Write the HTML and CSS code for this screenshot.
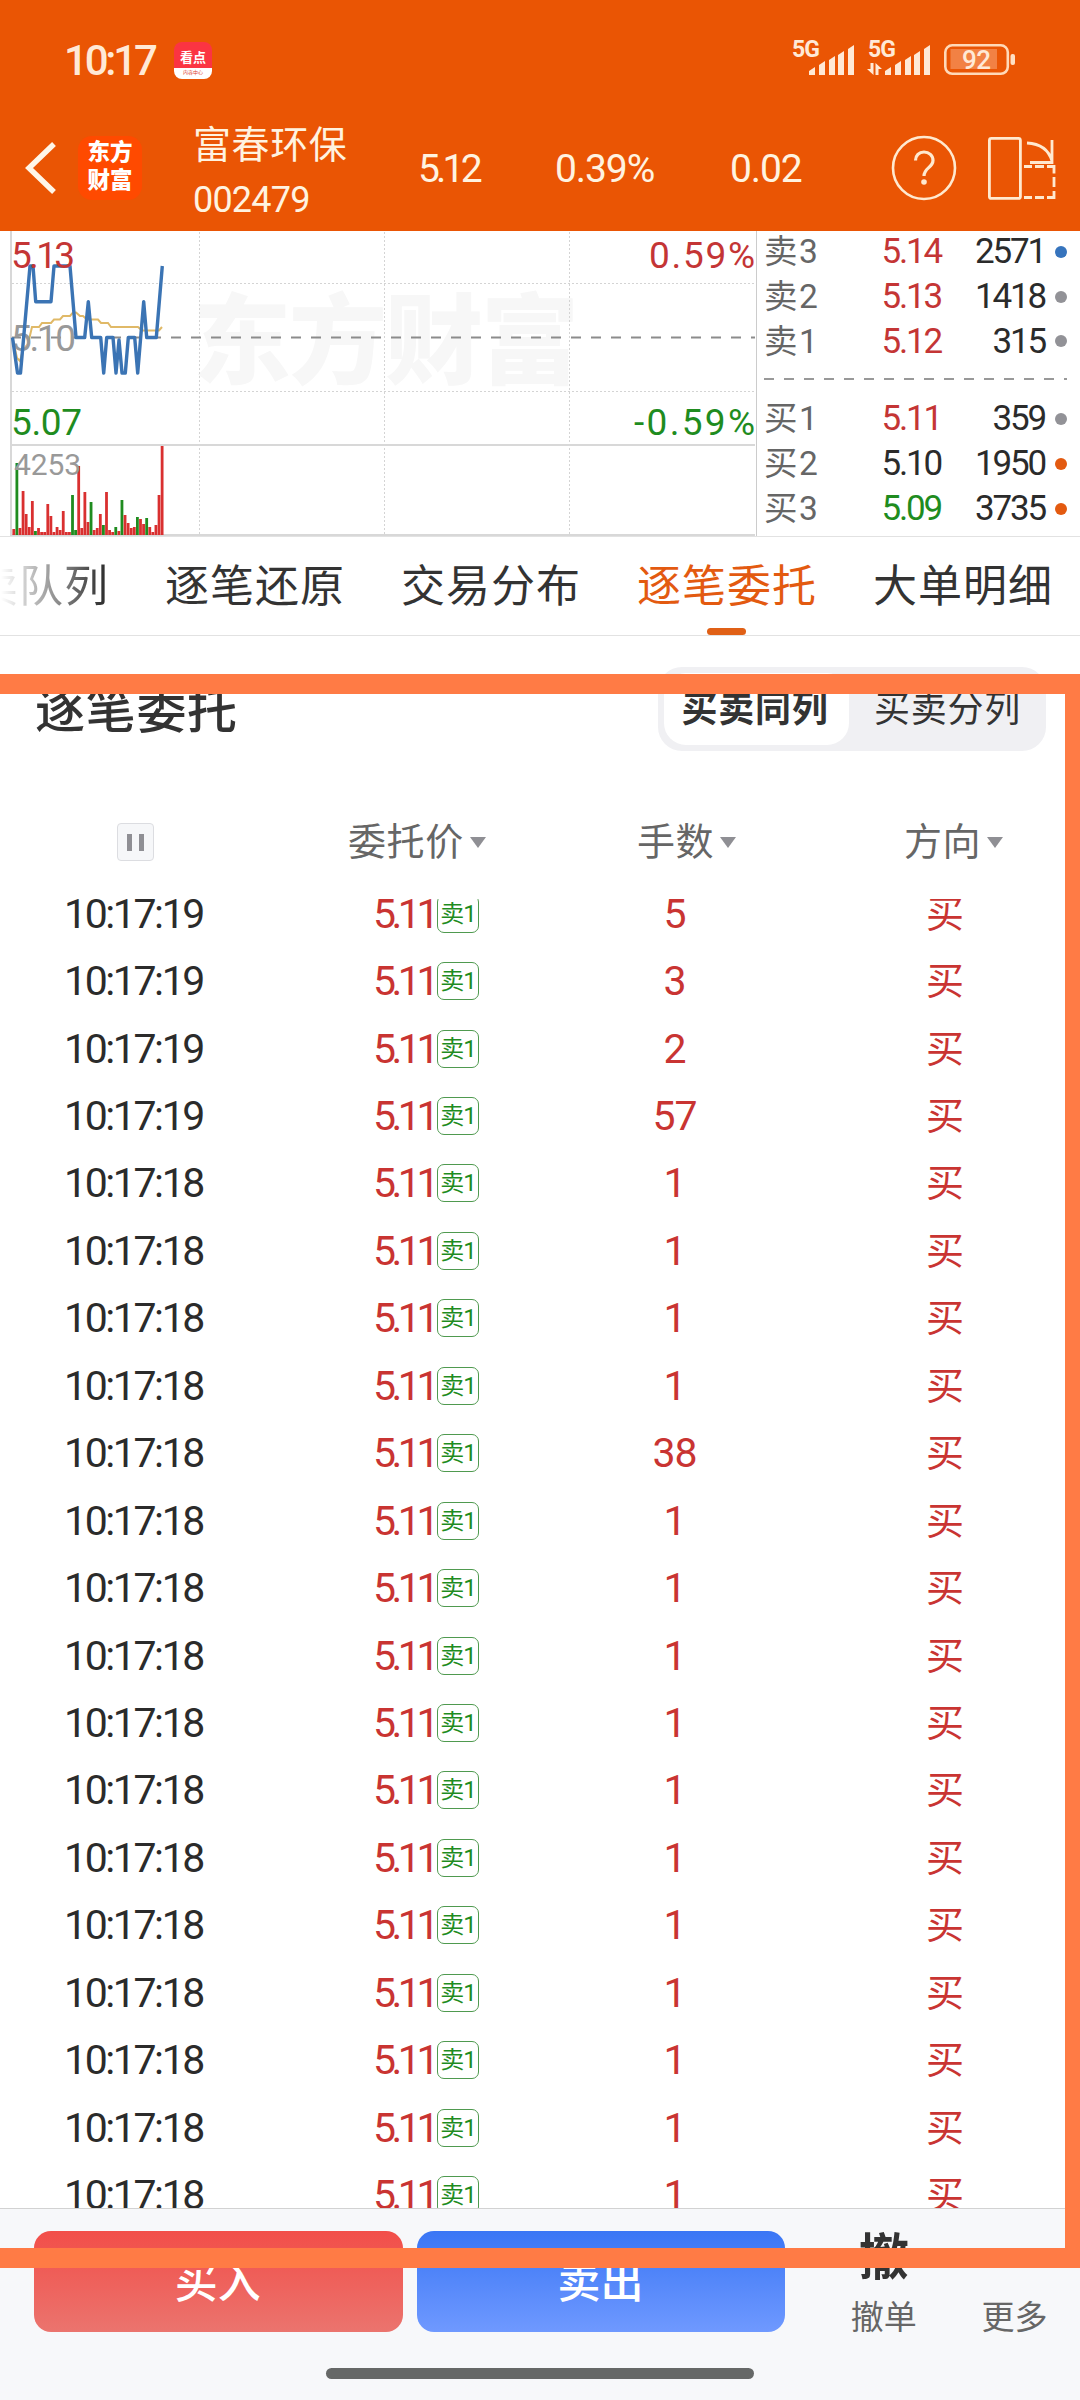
FILE: index.html
```html
<!DOCTYPE html>
<html lang="zh-CN">
<head>
  <meta charset="UTF-8">
  <title>富春环保 002479</title>
  <link rel="stylesheet" href="styles.css">
</head>
<body>
  <div class="screen">
    <header class="top">
      <div class="status">
        <span class="clock">10:17</span>
        <span class="app-badge"><b>看点</b><i>内容中心</i></span>
        <svg class="status-icons" width="226" height="40" viewBox="790 38 226 40">
          <g class="cell-text">
            <text x="792" y="57" textLength="28">5G</text>
            <text x="868" y="57" textLength="28">5G</text>
          </g>
          <g fill="#ffe9d6">
            <path d="M809 75v-4l6-4v8zM819 75v-10l6-4v14zM829 75v-15l6-4v19zM838 75v-20l6-4v24zM848 75v-26l6-4v30z"/>
            <path d="M885 75v-4l6-4v8zM895 75v-10l6-4v14zM905 75v-15l6-4v19zM914 75v-20l6-4v24zM924 75v-26l6-4v30z"/>
            <path d="M870.500 63h3v12l-6.500-6h3.500zM875.500 75v-12l6.500 6h-3.500v6z"/>
          </g>
          <rect x="950.500" y="49" width="46.500" height="20" fill="#f28144"/>
          <rect x="945.300" y="45.300" width="62.500" height="28.500" rx="7" fill="none" stroke="#ffd9b8" stroke-width="2.600"/>
          <rect x="1010.500" y="54" width="4.500" height="11" rx="2" fill="#ffe0c4"/>
          <text class="battery-text" x="962" y="69" textLength="29">92</text>
        </svg>
      </div>
      <div class="nav">
        <svg class="back" width="36" height="56" viewBox="0 0 36 56"><path d="M30 4L5 28l25 24" fill="none" stroke="#fff6e8" stroke-width="5.500"/></svg>
        <div class="logo">东方<br>财富</div>
        <div class="stock">
          <div class="stock-name">富春环保</div>
          <div class="stock-code">002479</div>
        </div>
        <span class="quote price">5.12</span>
        <span class="quote percent">0.39%</span>
        <span class="quote change">0.02</span>
        <svg class="help" width="66" height="66" viewBox="0 0 66 66" fill="none" stroke="#ffe9cf">
          <circle cx="33" cy="33" r="31" stroke-width="2.600"/>
          <path d="M24.500 25.500c0-5 3.500-8.500 8.500-8.500s9 3.500 9 8.500c0 7-9 7.500-9 15.500" stroke-width="3.200"/>
          <circle cx="33" cy="47" r="2.800" fill="#ffe9cf" stroke="none"/>
        </svg>
        <svg class="rotate" width="70" height="66" viewBox="987 134 70 66" fill="none" stroke="#ffe9cf" stroke-width="2.800">
          <rect x="989.400" y="137.400" width="31" height="60" rx="2"/>
          <path d="M1027 142q20 1 25 18M1052 139v22.500h-22"/>
          <path d="M1024 165.500h8M1035 165.500h9M1047 165.500h7v7M1054 176v10M1054 190v6.500h-7M1044 196.500h-9M1032 196.500h-8"/>
        </svg>
      </div>
    </header>

    <section class="market">
      <svg class="chart" width="756" height="305" viewBox="0 231 756 305">
        <text class="watermark" x="193" y="376" textLength="386">东方财富</text>
        <g class="grid">
          <path d="M199.500 232V535M384.500 232V535M569.500 232V535M12 283.500H755M12 391.500H755"/>
        </g>
        <path d="M11 337.500H755" stroke="#8c8c8c" stroke-width="2" stroke-dasharray="10 10"/>
        <path d="M11 231V536M11 445H755M11 535H755" stroke="#d8d8d8" stroke-width="2"/>
        <polyline class="avg-line" points="13,340 17,358 20,361 23,350 28,344 32,327 39,327 42,323 51,323 54,319.500 60,319.500 63,316 70,316 73,312.500 76,312.500 80,316 83,316 87,319.500 98,319.500 101,323 108,323 111,327 138,327 142,330.500 159,330.500 162,327"/>
        <g class="axis">
          <text x="11" y="351" textLength="65" fill="#999">5.10</text>
        </g>
        <polyline class="price-line" points="12.500,337.500 17.500,373 20.500,373 30,266 33,266 35.700,301.700 51,301.700 54,266 70,266 76,337.500 84.700,337.500 88.300,301.700 91.700,337.500 100.700,337.500 103.700,373 106.700,337.500 113,337.500 116,373 119,340 122,373 125.300,373 128.300,337.500 134.700,337.500 137.700,373 143.700,301.700 146.700,337.500 156.300,337.500 162.300,266"/>
        <g id="volume"></g>
        <g class="axis">
          <text x="11" y="268" textLength="64" fill="#c43535">5.13</text>
          <text x="11" y="435" textLength="71" fill="#1f8c1f">5.07</text>
          <text x="649" y="268" textLength="106" fill="#c43535">0.59%</text>
          <text x="634" y="435" textLength="121" fill="#1f8c1f">-0.59%</text>
          <text class="vol-max" x="14" y="475" textLength="67" fill="#999">4253</text>
        </g>
      </svg>
      <div class="book" id="book"></div>
    </section>

    <nav class="tabs">
      <a>买卖队列</a>
      <a>逐笔还原</a>
      <a>交易分布</a>
      <a class="active">逐笔委托</a>
      <a>大单明细</a>
    </nav>

    <section class="panel">
      <div class="panel-head">
        <h1>逐笔委托</h1>
        <div class="switch"><span class="on">买卖同列</span><span>买卖分列</span></div>
      </div>
      <div class="columns grid-row">
        <div><span class="pause"></span></div>
        <div class="sortable">委托价</div>
        <div class="sortable">手数</div>
        <div class="sortable">方向</div>
      </div>
      <div class="orders"><div class="orders-inner" id="orders"></div></div>
    </section>

    <footer class="actions">
      <div class="buttons">
        <button class="buy">买入</button>
        <button class="sell">卖出</button>
        <div class="tool"><b>撤</b><span>撤单</span></div>
        <div class="tool more"><b></b><span>更多</span></div>
      </div>
      <div class="home-bar"></div>
    </footer>

    <div class="marker"></div>
  </div>

  <script>
    // level, price, price colour, lots, dot colour
    const book = [
      ['卖3', '5.14', 'up', 2571, 'blue'],
      ['卖2', '5.13', 'up', 1418, 'gray'],
      ['卖1', '5.12', 'up', 315, 'gray'],
      null,
      ['买1', '5.11', 'up', 359, 'gray'],
      ['买2', '5.10', 'flat', 1950, 'orange'],
      ['买3', '5.09', 'down', 3735, 'orange']
    ];
    document.getElementById('book').innerHTML = book.map(r => r
      ? `<div class="level"><span class="name">${r[0]}</span><span class="lv-price ${r[2]}">${r[1]}</span><span class="lots">${r[3]}</span><i class="dot ${r[4]}"></i></div>`
      : '<div class="spread"></div>').join('');

    const lots = [5, 3, 2, 57, 1, 1, 1, 1, 38, 1, 1, 1, 1, 1, 1, 1, 1, 1, 1, 1];
    document.getElementById('orders').innerHTML = lots.map((n, i) => `
      <div class="grid-row order">
        <div class="time">10:17:${i < 4 ? 19 : 18}</div>
        <div class="order-price"><span>5.11</span><em>卖1</em></div>
        <div class="qty">${n}</div>
        <div class="side">买</div>
      </div>`).join('');

    // negative = falling minute
    const volume = [6, -72, 7, 44, 21, 8, 34, -4, 7, 3, 3, 31, 19, 3, 8, 5, 24, 3, 3, -40, -5, 69, 7, 43, 13,
      -33, 5, 7, 21, -10, 43, 5, 3, -8, 4, -35, 20, 12, 7, 8, -18, 16, 11, -17, 8, 3, 10, 40, 89];
    document.getElementById('volume').innerHTML = volume.map((v, i) => {
      const h = Math.abs(v);
      return `<rect x="${(12.4 + i * 3.09).toFixed(2)}" y="${535 - h}" width="2.8" height="${h}" fill="${v < 0 ? '#1f8c1f' : '#d93030'}"/>`;
    }).join('');
  </script>
</body>
</html>
```
FILE: styles.css
```css
* { box-sizing: border-box; }
body {
  margin: 0;
  background: #fff;
  color: #2b2b2b;
  font-family: Roboto, "Noto Sans CJK SC", sans-serif;
}
.screen {
  position: relative;
  width: 1080px;
  height: 2400px;
  overflow: hidden;
  display: flex;
  flex-direction: column;
}

/* header */
.top {
  height: 231px;
  flex: none;
  background: #ea5504;
  color: #fff3e0;
}
.status {
  height: 104px;
  padding: 38px 64px 0 64px;
  display: flex;
  align-items: flex-start;
}
.clock {
  width: 110px;
  font-size: 42px;
  line-height: 45px;
  font-weight: 500;
  letter-spacing: -3.200px;
  color: #ffe9d6;
}
.app-badge {
  width: 38px;
  height: 37px;
  margin-top: 4px;
  border-radius: 8px;
  background: linear-gradient(#fb3442 0 26px, #fff 26px);
  display: flex;
  flex-direction: column;
  align-items: center;
}
.app-badge b { font-size: 13px; line-height: 18px; margin-top: 7px; height: 19px; color: #fff; }
.app-badge i { font-size: 5px; line-height: 9px; font-style: normal; color: #d43; }
.status-icons { margin-left: auto; overflow: visible; }
.cell-text text { font-size: 23px; font-weight: 700; fill: #ffe9d6; }
.battery-text { font-size: 26px; font-weight: 500; fill: #ffe9d6; }
.nav {
  height: 127px;
  display: flex;
  align-items: center;
  padding-left: 24px;
}
.back { flex: none; }
.logo {
  width: 64px;
  height: 64px;
  margin-left: 18px;
  padding-top: 2px;
  border-radius: 14px;
  background: #ff4a00;
  color: #fff;
  text-align: center;
  font-size: 22.500px;
  line-height: 28px;
  font-weight: 900;
}
.stock { width: 225px; margin: 10px 0 0 51px; }
.stock-name { font-size: 38px; line-height: 46px; letter-spacing: .6px; }
.stock-code { font-size: 36px; line-height: 46px; margin-top: 9px; letter-spacing: -.8px; }
.quote { font-size: 39px; line-height: 46px; margin-top: 2px; letter-spacing: -1.100px; }
.price { width: 137px; letter-spacing: -3.800px; }
.percent { width: 175px; }
.change { width: 161px; }
.help { flex: none; }
.rotate { flex: none; margin-left: 30px; }

/* intraday chart and order book */
.market {
  height: 306px;
  flex: none;
  display: flex;
  border-bottom: 1px solid #e2e2e2;
}
.chart { flex: none; display: block; }
.watermark { font-size: 98px; font-weight: 900; fill: #f7f7f7; }
.grid { fill: none; stroke: #d4d4d4; stroke-width: 1; stroke-dasharray: 2 2; }
.axis text { font-size: 37px; }
.axis .vol-max { font-size: 30px; }
.avg-line { fill: none; stroke: #e0b967; stroke-width: 2; }
.price-line { fill: none; stroke: #3b74b4; stroke-width: 3.400; stroke-linejoin: round; }
.book {
  flex: 1;
  border-left: 1px solid #ccc;
  padding-right: 13px;
}
.level {
  height: 45px;
  padding-left: 7px;
  display: flex;
  align-items: center;
  font-size: 35px;
  line-height: 45px;
}
.level:first-child { margin-top: -2px; }
.level:nth-child(3) { height: 44px; }
.name { width: 80px; font-size: 33.500px; letter-spacing: 1.500px; color: #666; }
.lv-price { width: 97px; text-align: right; letter-spacing: -2.200px; }
.lots { width: 104px; text-align: right; letter-spacing: -2.200px; }
.up { color: #c43535; }
.down { color: #1f8c1f; }
.dot {
  width: 12px;
  height: 12px;
  margin-left: 10px;
  border-radius: 50%;
}
.blue { background: #3674bd; }
.gray { background: #929297; }
.orange { background: #e35a10; }
.spread {
  height: 33px;
  margin-left: 7px;
  background: repeating-linear-gradient(90deg, #999 0 10px, transparent 10px 20px) 0 15px / 100% 2px no-repeat;
}

/* tabs */
.tabs {
  height: 99px;
  flex: none;
  display: flex;
  gap: 56px;
  padding-left: 2px;
  border-bottom: 1px solid #e2e2e2;
}
.tabs a {
  position: relative;
  flex: none;
  width: 180px;
  padding-top: 3px;
  font-size: 44px;
  line-height: 95px;
  letter-spacing: 1px;
  color: #333;
}
.tabs a:first-child {
  margin-left: -73px;
  background: linear-gradient(90deg, #fff 40%, #333 96%);
  background-clip: text;
  color: transparent;
}
.tabs .active { color: #e35a10; }
.tabs .active::after {
  content: "";
  position: absolute;
  left: 70px;
  bottom: 0;
  width: 39px;
  height: 7px;
  border-radius: 4px;
  background: #e06016;
}

/* order list */
.panel { height: 1572px; flex: none; display: flex; flex-direction: column; }
.panel-head {
  height: 146px;
  padding: 31px 34px 0 35px;
  display: flex;
  justify-content: space-between;
}
.panel-head h1 {
  margin: 0;
  font-size: 50px;
  font-weight: 500;
  line-height: 88px;
  letter-spacing: .7px;
  color: #333;
}
.switch {
  width: 388px;
  height: 84px;
  padding: 6px;
  display: flex;
  border-radius: 24px;
  background: #f0f0f3;
}
.switch span {
  flex: 1;
  padding-left: 6px;
  font-size: 36px;
  line-height: 74px;
  letter-spacing: .8px;
  text-align: center;
  color: #333;
}
.switch .on {
  flex: none;
  width: 185px;
  padding: 0 3px 0 0;
  background: #fff;
  border-radius: 22px;
  font-weight: 700;
}
.grid-row {
  display: grid;
  grid-template-columns: 270px 270px 270px 270px;
  align-items: center;
}
.columns { height: 117px; padding-top: 3px; color: #666; font-size: 38px; }
.columns > div:first-child { padding-left: 117px; }
.pause {
  display: block;
  width: 37px;
  height: 38px;
  border: 1px solid #dcdde1;
  border-radius: 4px;
  background: linear-gradient(#8f8f94, #8f8f94) 9px 10px / 5px 17px no-repeat,
    linear-gradient(#8f8f94, #8f8f94) 21px 10px / 5px 17px no-repeat, #f6f7f9;
}
.sortable { display: flex; align-items: center; line-height: 54px; letter-spacing: .6px; }
.sortable:nth-child(2) { padding-left: 78px; }
.sortable:nth-child(3) { padding-left: 97px; }
.sortable:nth-child(4) { padding-left: 94px; }
.sortable::after {
  content: "";
  margin-left: 6px;
  border: 8px solid transparent;
  border-top: 11px solid #8f8f94;
  border-bottom: 0;
}
.orders { flex: 1; overflow: hidden; }
.orders-inner { margin-top: -19px; }
.order { height: 67.450px; font-size: 41px; line-height: 60px; color: #c93432; }
.time { padding-left: 64px; letter-spacing: -2.400px; color: #2b2b2b; }
.order-price { display: flex; align-items: center; padding-left: 103px; }
.order-price span { width: 64px; letter-spacing: -4.500px; }
.order-price em {
  width: 42px;
  height: 38px;
  border: 1.500px solid #4f9a4f;
  border-radius: 7px;
  font-size: 24px;
  line-height: 36px;
  font-style: normal;
  letter-spacing: -1px;
  text-align: center;
  color: #1f8c1f;
}
.qty { text-align: center; letter-spacing: -1px; padding-right: 1px; }
.side { text-align: center; font-size: 38px; }

/* bottom bar */
.actions {
  flex: 1;
  padding-top: 22px;
  border-top: 1px solid #d2d2d2;
  background: #f7f8fa;
}
.buttons { display: flex; padding-left: 34px; }
.buttons button {
  width: 369px;
  height: 101px;
  margin-right: 14px;
  padding: 0 1px 5px 0;
  border: 0;
  border-radius: 17px;
  color: #fff;
  font: 500 43px "Noto Sans CJK SC", sans-serif;
}
.buttons .sell { margin-right: 0; }
.buy { background: linear-gradient(#f24e49, #eb746e); }
.sell { background: linear-gradient(#3a76f5, #6f99ff); }
.tool {
  width: 131px;
  margin-left: 33px;
  text-align: center;
  font-size: 33px;
  color: #666;
}
.tool b { display: block; height: 64px; font-size: 50px; line-height: 54px; color: #333; }
.tool span { display: block; line-height: 46px; }
.tool.more { margin-left: 0; }
.home-bar {
  width: 428px;
  height: 11px;
  margin: 27px auto 0;
  border-radius: 6px;
  background: #666867;
}

/* highlight frame drawn over the page */
.marker {
  position: absolute;
  top: 674px;
  left: 0;
  width: 1080px;
  height: 1594px;
  border: 20px solid #ff7b45;
  border-left: 0;
  border-right-width: 15px;
  pointer-events: none;
}
```
